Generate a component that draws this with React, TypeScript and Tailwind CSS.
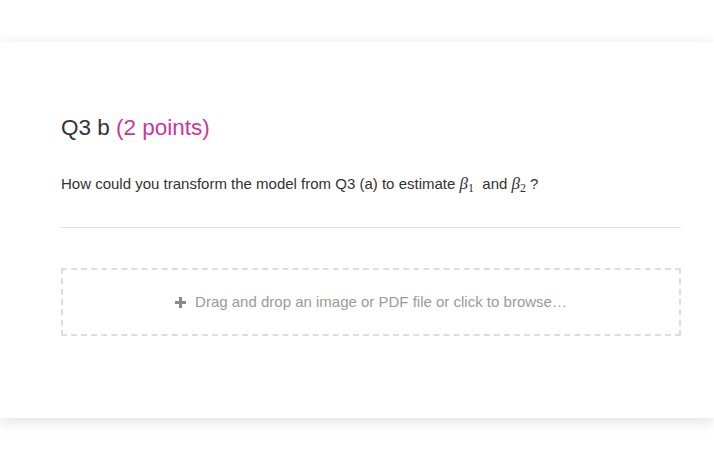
export default function App() {
  return (
    <div className="min-h-[462px] bg-white pt-[42px] font-['Liberation_Sans',Arial,sans-serif]">
      <div className="h-[376px] bg-white pl-[61px] pr-[33px] pt-[73px] shadow-[0_3px_14px_rgba(0,0,0,0.13)]">
        {/* Question title */}
        <h3 className="text-[22.5px] leading-[26px] text-[#333]">
          Q3 b <span className="text-[#c9379e]">(2 points)</span>
        </h3>

        <p className="mt-[33px] text-[15px] leading-[20px] text-[#333]">
          How could you transform the model from Q3 (a) to estimate{" "}
          <span className="font-['Liberation_Serif',serif] text-[17px] italic">β</span>
          <sub className="font-['Liberation_Serif',serif] text-[12px]">1</sub>
          {"\u00a0 "}and{" "}
          <span className="font-['Liberation_Serif',serif] text-[17px] italic">β</span>
          <sub className="font-['Liberation_Serif',serif] text-[12px]">2</sub>
          <span className="ml-[4px]">?</span>
        </p>

        <div className="mt-[33px] border-t border-[#e3e3e3]" />

        {/* Upload drop zone */}
        <div className="mt-[40px] flex h-[68px] items-center justify-center gap-[9px] border-2 border-dashed border-[#dddddd] text-[15px] text-[#9a9a9a]">
          <svg width="11" height="11" viewBox="0 0 11 11" className="text-[#8a8a8a]">
            <rect x="4" y="0" width="3" height="11" fill="currentColor" />
            <rect x="0" y="4" width="11" height="3" fill="currentColor" />
          </svg>
          <span>Drag and drop an image or PDF file or click to browse…</span>
        </div>
      </div>
    </div>
  );
}
